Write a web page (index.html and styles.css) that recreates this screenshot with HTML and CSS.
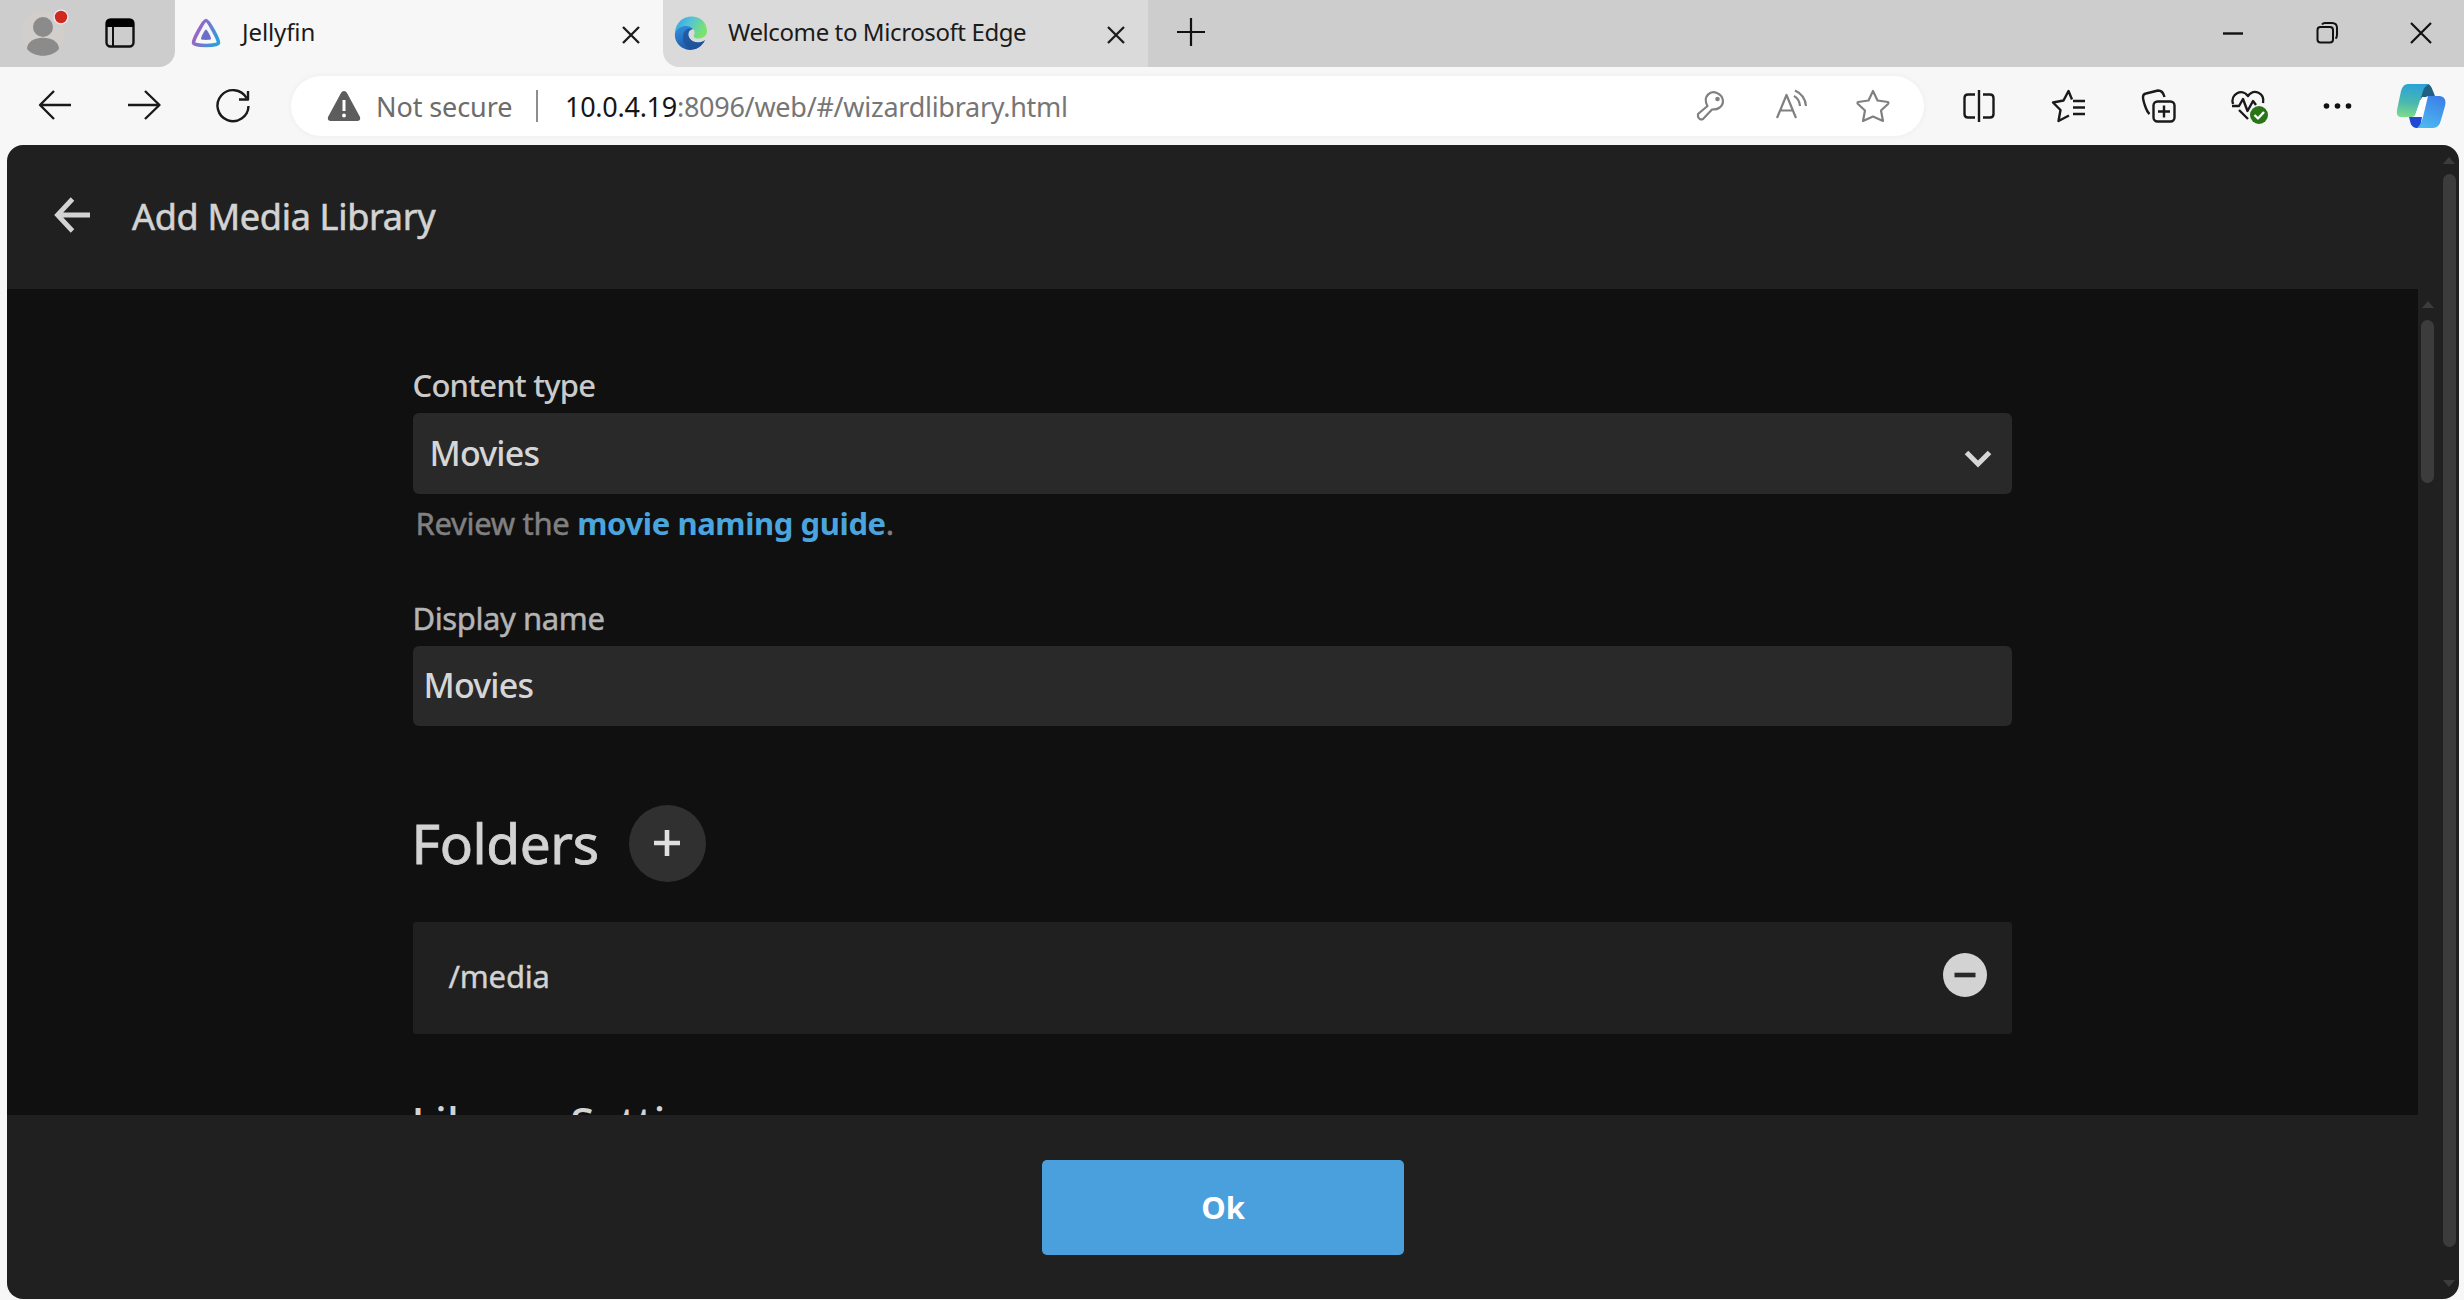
FILE: index.html
```html
<!DOCTYPE html>
<html lang="en">
<head>
<meta charset="utf-8">
<title>Jellyfin</title>
<link rel="stylesheet" href="styles.css">
</head>
<body>
<div class="browser">
  <div class="tabstrip">
    <div class="tools">
      <svg class="avatar" width="48" height="52" viewBox="0 0 48 52"><ellipse cx="22" cy="26" rx="22" ry="22" fill="#d1cecb"/><circle cx="22" cy="20" r="10" fill="#8b8b8b"/><path d="M6 42C6 27 38 27 38 42C31 51 13 51 6 42Z" fill="#8b8b8b"/><circle cx="40" cy="10" r="7.5" fill="#ececec"/><circle cx="40" cy="10" r="6.2" fill="#d02a20"/></svg>
      <svg class="tab-actions" width="30" height="30" viewBox="0 0 30 30"><rect x="1.5" y="1.5" width="27" height="27" rx="4" fill="none" stroke="#111" stroke-width="2.4"/><path d="M1 9V5Q1 1 5 1H25Q29 1 29 5V9Z" fill="#000"/><path d="M8 9V28" stroke="#111" stroke-width="2"/></svg>
    </div>
    <div class="tab tab-active">
      <svg class="favicon" width="32" height="32" viewBox="0 0 32 32"><defs><linearGradient id="jf" x1="0" y1=".4" x2="1" y2=".8"><stop offset="0" stop-color="#aa5cc3"/><stop offset="1" stop-color="#2a9fdc"/></linearGradient></defs><path d="M16 3.5C18.5 3.5 29 23 28.5 26C28 29.3 4 29.3 3.5 26C3 23 13.500 3.500 16 3.500Z" fill="none" stroke="url(#jf)" stroke-width="3.600"/><path d="M16 12.500C17 12.500 21.500 20.500 21 22C20.500 23.200 11.500 23.200 11 22C10.500 20.500 15 12.500 16 12.500Z" fill="#6c6fc8"/></svg>
      <span class="tab-title">Jellyfin</span>
      <svg class="tab-close" width="20" height="20" viewBox="0 0 20 20"><path d="M2 2L18 18M18 2L2 18" stroke="#1c1c1c" stroke-width="2.300"/></svg>
    </div>
    <div class="tab tab-idle">
      <svg class="favicon" width="34" height="34" viewBox="0 0 34 34"><defs><linearGradient id="e1" x1="0" y1="0" x2="1" y2=".4"><stop offset="0" stop-color="#2f9fe0"/><stop offset=".5" stop-color="#55c4d8"/><stop offset="1" stop-color="#7be36a"/></linearGradient><linearGradient id="e2" x1="0" y1="0" x2=".6" y2="1"><stop offset="0" stop-color="#3295e2"/><stop offset="1" stop-color="#1c4fa0"/></linearGradient></defs><path d="M1 17C2 -4 32 -5 33 15C33 23 22 24 20 21C19 19 22 18 20 14C17 9 6 10 1 17Z" fill="url(#e1)"/><path d="M1 17C4 9 15 8 19 13C12 14 13 24 21 26C25 27 29 26 31 24C22 42 -1 33 1 17Z" fill="url(#e2)"/><path d="M9 20C10 13 15 12 19 13C12 14 13 24 21 26C25 27 29 26 31 24C28 31 22 33 19 33C13 32 8 27 9 20Z" fill="#1d5299" opacity=".75"/></svg>
      <span class="tab-title tab-title-wide">Welcome to Microsoft Edge</span>
      <svg class="tab-close" width="20" height="20" viewBox="0 0 20 20"><path d="M2 2L18 18M18 2L2 18" stroke="#1c1c1c" stroke-width="2.300"/></svg>
    </div>
    <svg class="new-tab" width="30" height="30" viewBox="0 0 30 30"><path d="M15 1V29M1 15H29" stroke="#111" stroke-width="2.200"/></svg>
    <div class="window-controls">
      <svg width="24" height="24" viewBox="0 0 24 24"><path d="M2 12.500H22" stroke="#111" stroke-width="2.400"/></svg>
      <svg width="24" height="24" viewBox="0 0 24 24"><rect x="2.500" y="6" width="15.500" height="15.500" rx="3" fill="none" stroke="#111" stroke-width="2"/><path d="M7 3.500Q8 2 10 2H17Q22 2 22 7V14Q22 16.500 20.500 17.500" fill="none" stroke="#111" stroke-width="2"/></svg>
      <svg width="24" height="24" viewBox="0 0 24 24"><path d="M2 2L22 22M22 2L2 22" stroke="#111" stroke-width="2.200"/></svg>
    </div>
  </div>

  <div class="toolbar">
    <div class="nav">
      <svg class="ico" viewBox="0 0 40 40"><path d="M36 19H5M19 5L5 19L19 33"/></svg>
      <svg class="ico" viewBox="0 0 40 40"><path d="M4 19H36M21 5L35.500 19L21 33"/></svg>
      <svg class="ico" viewBox="0 0 40 40"><path d="M33.500 12A15.500 15.500 0 1 0 35.500 20M35 5V13.500H26"/></svg>
    </div>
    <div class="address">
      <svg width="36" height="34" viewBox="0 0 36 34"><path d="M18 2Q20 2 21 4L34 28Q35 32 31 32H5Q1 32 2 28L15 4Q16 2 18 2Z" fill="#5d5d5d"/><path d="M18 11V22" stroke="#fff" stroke-width="3"/><circle cx="18" cy="26.500" r="1.900" fill="#fff"/></svg>
      <span class="secure">Not secure</span>
      <span class="divider"></span>
      <span class="url"><span class="host">10.0.4.19</span>:8096/web/#/wizardlibrary.html</span>
      <div class="address-actions">
        <svg class="ico soft" viewBox="0 0 40 40"><path d="M16.500 20C11 10 20 4 26 7C33 10 34 18 28 22C25 24 23 23 21 23.500L12 33C10 34 7 33 7 30V28L16.500 20Z"/><circle cx="26.500" cy="13" r="1.200"/></svg>
        <svg class="ico soft" viewBox="0 0 40 40"><path d="M5 32L14.500 9L24 32M8.500 24.500H20.500M22 10Q27.500 13 28 20M23 4.500Q33 9 34 20"/></svg>
        <svg class="ico soft" viewBox="0 0 40 40"><path d="M20 5L24.500 14.500L35 16Q36 17 35 18L28 24.500L30 35L20 30.500L10 35L12 24.500L5 18Q4 17 5 16L15.500 14.500Z"/></svg>
      </div>
    </div>
    <div class="actions">
      <svg class="ico" viewBox="0 0 40 40"><path d="M20 4V36M16 8.500H9Q5.500 8.500 5.500 12V28Q5.500 31.500 9 31.500H16M24 8.500H31Q34.500 8.500 34.500 12V28Q34.500 31.500 31 31.500H24"/></svg>
      <svg class="ico" viewBox="0 0 40 40"><path d="M23 13.500L19.500 5L14.500 14.500L4 16.500L11.500 24L9.500 35L20 29.500M24 15H36M24 21.500H36M24 28H36"/></svg>
      <svg class="ico" viewBox="0 0 40 40"><rect x="14.500" y="15.500" width="21" height="20" rx="4"/><path d="M25 19.500V31.500M19 25.500H31M10.500 28C7 25 4 14 4 11Q4 8 7 7.500L19 4.500Q24 4.500 25.500 11"/></svg>
      <svg class="ico" viewBox="0 0 40 40"><path d="M4 18C1 8 13 2 19 10C25 2 36 7 34 17M3 20H10L14 13L18.500 25L24 15L27 19M10 24L19 33"/><circle cx="30" cy="29" r="9" fill="#2a7418" stroke="none"/><path d="M25.500 29L29 32.500L35 26" stroke="#fff"/></svg>
      <svg class="ico" viewBox="0 0 40 40"><g fill="#111" stroke="none"><circle cx="7.500" cy="20" r="2.800"/><circle cx="18.500" cy="20" r="2.800"/><circle cx="29.500" cy="20" r="2.800"/></g></svg>
      <svg class="copilot" width="50" height="48" viewBox="0 0 50 48"><defs><linearGradient id="c1" x1=".3" y1="0" x2=".2" y2="1"><stop offset="0" stop-color="#2ba3d8"/><stop offset=".55" stop-color="#4ab8ae"/><stop offset="1" stop-color="#7fdc8a"/></linearGradient><linearGradient id="c2" x1=".7" y1="0" x2=".3" y2="1"><stop offset="0" stop-color="#3d80e8"/><stop offset="1" stop-color="#4cb9ef"/></linearGradient></defs><path d="M28 2H32Q35 3 37 9L39 14H32L24 18Z" fill="#215f83"/><path d="M12 2H33Q28 4 26 12L20 31Q19 35 15 35H4Q0 34 1 28L5 9Q7 2 12 2Z" fill="url(#c1)"/><path d="M26 15H33L26 36H18Z" fill="#fff"/><path d="M13 35H26L24 46H20Q15 45 14 39Z" fill="#2148d2"/><path d="M32 14H44Q51 15 49 24L45 38Q43 46 37 46H21Q25 43 27 35Z" fill="url(#c2)"/></svg>
    </div>
  </div>

  <div class="page">
    <div class="dialog">
      <header class="dialog-header">
        <svg width="38" height="38" viewBox="0 0 38 38"><path d="M36 19H4M18.500 3L3.500 19L18.500 35" fill="none" stroke="#d3d3d3" stroke-width="4.800"/></svg>
        <h1>Add Media Library</h1>
      </header>
      <div class="dialog-body">
        <form class="form">
          <label class="label label-strong">Content type</label>
          <div class="field select"><span>Movies</span>
            <svg width="28" height="18" viewBox="0 0 28 18"><path d="M2.500 2.500L14 14L25.500 2.500" fill="none" stroke="#d6d6d6" stroke-width="5"/></svg>
          </div>
          <p class="hint">Review the <a>movie naming guide</a>.</p>
          <label class="label">Display name</label>
          <div class="field input"><span>Movies</span></div>
          <div class="folders"><h2>Folders</h2>
            <span class="add"><svg width="28" height="28" viewBox="0 0 28 28"><path d="M14 1V27M1 14H27" stroke="#e0e0e0" stroke-width="4.600"/></svg></span>
          </div>
          <div class="folder"><span>/media</span>
            <svg width="46" height="46" viewBox="0 0 46 46"><circle cx="23" cy="23" r="22" fill="#d3d3d3"/><path d="M12.500 23H33.500" stroke="#292929" stroke-width="4.600"/></svg>
          </div>
          <h3>Library Settings</h3>
        </form>
        <div class="scroll scroll-inner"><i class="up"></i><b></b></div>
      </div>
      <footer class="dialog-footer"><span class="ok">Ok</span></footer>
    </div>
    <div class="scroll scroll-outer"><i class="up"></i><b></b><i class="down"></i></div>
  </div>
</div>
</body>
</html>
```

FILE: styles.css
```css
* { box-sizing: border-box; }
body { margin: 0; background: #f7f7f7; font-family: "Noto Sans", "Open Sans", sans-serif; }
svg { display: block; flex: none; }
h1, h2, h3, p { margin: 0; font-weight: 400; }
.browser { display: flex; flex-direction: column; width: 2464px; height: 1300px; overflow: hidden; background: #f7f7f7; }

/* Tab strip */
.tabstrip { display: flex; height: 67px; background: #f7f7f7; white-space: nowrap; }
.tools { display: flex; width: 175px; background: #cdcdcd; border-bottom-right-radius: 16px; padding-left: 21px; }
.avatar { margin-top: 7px; }
.tab-actions { margin: 18px 0 0 36px; }
.tab { display: flex; align-items: center; font-size: 24px; color: #1b1b1b; }
.tab-active { width: 488px; background: #f7f7f7; padding: 0 22px 0 14px; }
.tab-idle { width: 485px; background: #dadada; padding: 0 22px 0 11px; border-bottom-left-radius: 16px; }
.favicon { margin-top: -2px; }
.tab-active .favicon { margin-left: 1px; }
.tab-title { margin-left: 20px; line-height: 64px; height: 67px; flex: 1; letter-spacing: -.1px; }
.tab-title-wide { letter-spacing: -.4px; }
.tab-close { margin-top: 2px; }
.new-tab { width: 72px; height: 67px; padding: 17px 14px 20px 28px; background: #cdcdcd; }
.window-controls { display: flex; gap: 70px; flex: 1; justify-content: flex-end; padding: 21px 31px 0 0; background: #cdcdcd; }

/* Toolbar */
.toolbar { display: flex; align-items: center; height: 78px; padding-left: 35px; white-space: nowrap; }
.ico { width: 40px; height: 40px; fill: none; stroke: #1a1a1a; stroke-width: 2.4; stroke-linejoin: round; }
.soft { stroke: #808080; stroke-width: 2.2; }
.nav { display: flex; gap: 49px; }
.address { display: flex; align-items: center; width: 1633px; height: 60px; margin-left: 38px; padding: 0 31px 0 35px; border-radius: 30px; background: #fff; box-shadow: 0 0 6px rgba(0, 0, 0, .05); font-size: 27px; color: #767676; }
.secure { width: 159px; margin-left: 14px; color: #6c6c6c; line-height: 60px; letter-spacing: -.1px; padding-top: 1px; }
.divider { width: 2px; height: 32px; margin-left: 1px; background: #8d8d8d; }
.url { margin-left: 27px; padding-top: 1px; letter-spacing: -.27px; line-height: 60px; }
.host { color: #151515; }
.address-actions { display: flex; gap: 41px; margin-left: auto; }
.actions { display: flex; align-items: center; margin-left: 35px; gap: 50px; }
.actions .copilot { margin-left: -13px; }

/* Page */
.page { display: flex; width: 2452px; height: 1154px; margin-left: 7px; border-radius: 16px; overflow: hidden; background: #202020; color: #d3d3d3; }
.dialog { display: flex; flex-direction: column; width: 2429px; }
.dialog-header { display: flex; align-items: center; height: 144px; padding: 0 0 4px 47px; }
h1 { margin-left: 40px; font-size: 36px; line-height: 60px; padding-top: 4px; letter-spacing: -.3px; -webkit-text-stroke: .6px; }
.dialog-body { display: flex; height: 826px; overflow: hidden; }
.form { width: 2411px; height: 826px; padding: 76px 406px 0 405.500px; background: #101010; overflow: hidden; }
.label { display: block; height: 40px; margin-bottom: 8px; font-size: 31px; line-height: 40px; letter-spacing: -.4px; color: #b4b4b4; -webkit-text-stroke: .5px; }
.label-strong { font-weight: 500; letter-spacing: -.8px; color: #cacaca; -webkit-text-stroke: 0; }
.field { display: flex; align-items: center; justify-content: space-between; border-radius: 6px; background: #292929; font-size: 34px; font-weight: 500; letter-spacing: -.8px; line-height: 60px; color: #d6d6d6; }
.field span { margin-top: -2px; }
.select { height: 81px; padding: 0 20px 0 17px; }
.select svg { margin-top: 10px; }
.input { height: 80px; padding-left: 11px; }
.hint { height: 40px; margin: 9px 0 55px 3px; font-size: 31px; line-height: 40px; letter-spacing: -.3px; color: #808080; -webkit-text-stroke: .5px; }
.hint a { font-weight: 700; letter-spacing: -.4px; color: #4aa5df; -webkit-text-stroke: 0; }
.folders { display: flex; align-items: center; gap: 30px; height: 78px; margin-top: 78px; }
h2 { margin-left: -1px; font-size: 55px; line-height: 78px; letter-spacing: -.4px; -webkit-text-stroke: .8px; }
.add { display: flex; align-items: center; justify-content: center; width: 77px; height: 77px; border-radius: 50%; background: #303030; }
.folder { display: flex; align-items: center; justify-content: space-between; height: 112px; margin-top: 40px; padding: 0 24px 6px 36px; border-radius: 3px; background: #202020; font-size: 31px; line-height: 50px; letter-spacing: -.2px; -webkit-text-stroke: .4px; }
.folder span { padding-top: 1px; }
h3 { margin: 60px 0 0 -1px; font-size: 44px; font-weight: 500; line-height: 56px; }
.dialog-footer { display: flex; height: 184px; padding: 45px 0 0 1035px; }
.ok { width: 362px; height: 95px; border-radius: 5px; background: #4aa0dc; color: #fff; font-size: 31px; font-weight: 700; line-height: 94px; text-align: center; }

/* Scrollbars */
.scroll { display: flex; flex-direction: column; align-items: center; }
.scroll b { width: 13px; border-radius: 7px; background: #3c3c3c; }
.scroll i { border: 6.5px solid transparent; border-top: 0; border-bottom: 7px solid #3c3c3c; }
.scroll .down { border-bottom: 0; border-top: 7px solid #3c3c3c; }
.scroll-inner { width: 17px; padding: 12px 0 0 2px; }
.scroll-inner b { height: 163px; margin-top: 12px; }
.scroll-outer { width: 23px; padding: 12px 0 0 3px; }
.scroll-outer b { height: 1073px; margin-top: 10px; }
.scroll-outer .down { margin-top: 33px; }
```
